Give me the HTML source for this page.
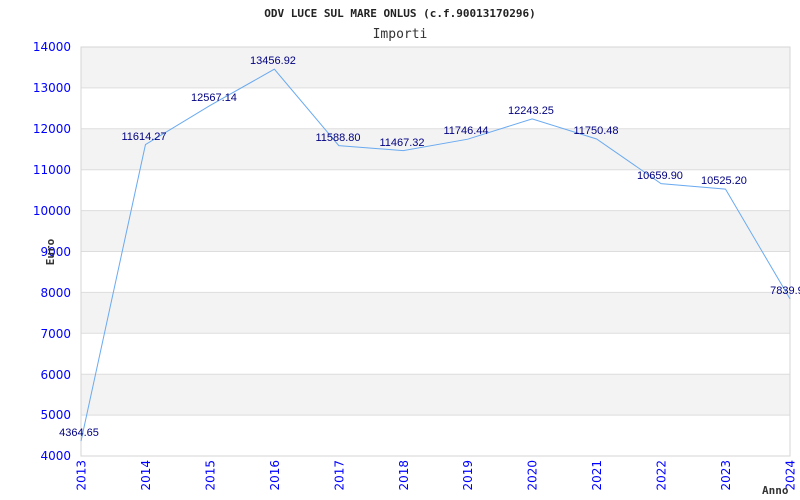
<!DOCTYPE html><html><head><meta charset="utf-8"><style>body{margin:0;background:#fff}svg{display:block}</style></head><body>
<svg width="800" height="500" xmlns="http://www.w3.org/2000/svg">
<rect width="800" height="500" fill="#fff"/>
<text x="400" y="17" text-anchor="middle" font-family="DejaVu Sans Mono, Liberation Mono, monospace" font-weight="bold" font-size="11" fill="#222">ODV LUCE SUL MARE ONLUS (c.f.90013170296)</text>
<text x="400" y="38" text-anchor="middle" font-family="DejaVu Sans Mono, Liberation Mono, monospace" font-size="13" fill="#333">Importi</text>
<g fill="#f3f3f3">
<rect x="81" y="47" width="709" height="40.9"/>
<rect x="81" y="128.8" width="709" height="40.9"/>
<rect x="81" y="210.6" width="709" height="40.9"/>
<rect x="81" y="292.4" width="709" height="40.9"/>
<rect x="81" y="374.2" width="709" height="40.9"/>
</g>
<g stroke="#ddd" stroke-width="1">
<line x1="81" x2="790" y1="87.9" y2="87.9"/><line x1="81" x2="790" y1="128.8" y2="128.8"/>
<line x1="81" x2="790" y1="169.7" y2="169.7"/><line x1="81" x2="790" y1="210.6" y2="210.6"/>
<line x1="81" x2="790" y1="251.5" y2="251.5"/><line x1="81" x2="790" y1="292.4" y2="292.4"/>
<line x1="81" x2="790" y1="333.3" y2="333.3"/><line x1="81" x2="790" y1="374.2" y2="374.2"/>
<line x1="81" x2="790" y1="415.1" y2="415.1"/>
<rect x="81" y="47" width="709" height="409" fill="none" stroke="#d6d6d6"/>
</g>
<g font-family="DejaVu Sans, Liberation Sans, sans-serif" font-size="12" fill="#0000ff" text-anchor="end">
<text x="71" y="51">14000</text><text x="71" y="92">13000</text><text x="71" y="133">12000</text>
<text x="71" y="174">11000</text><text x="71" y="215">10000</text><text x="71" y="256">9000</text>
<text x="71" y="297">8000</text><text x="71" y="338">7000</text><text x="71" y="379">6000</text>
<text x="71" y="419">5000</text><text x="71" y="460">4000</text>
</g>
<g font-family="DejaVu Sans, Liberation Sans, sans-serif" font-size="12" fill="#0000ff" text-anchor="end">
<text transform="translate(85.5,460) rotate(-90)">2013</text>
<text transform="translate(150,460) rotate(-90)">2014</text>
<text transform="translate(214.4,460) rotate(-90)">2015</text>
<text transform="translate(278.9,460) rotate(-90)">2016</text>
<text transform="translate(343.3,460) rotate(-90)">2017</text>
<text transform="translate(407.8,460) rotate(-90)">2018</text>
<text transform="translate(472.2,460) rotate(-90)">2019</text>
<text transform="translate(536.7,460) rotate(-90)">2020</text>
<text transform="translate(601.1,460) rotate(-90)">2021</text>
<text transform="translate(665.6,460) rotate(-90)">2022</text>
<text transform="translate(730,460) rotate(-90)">2023</text>
<text transform="translate(794.5,460) rotate(-90)">2024</text>
</g>
<text transform="translate(54,252) rotate(-90)" text-anchor="middle" font-family="DejaVu Sans Mono, monospace" font-weight="bold" font-size="11" fill="#333">Euro</text>
<text x="762" y="494" font-family="DejaVu Sans Mono, monospace" font-weight="bold" font-size="11" fill="#333">Anno</text>
<polyline fill="none" stroke="#6aaaf0" stroke-width="1" points="81,441.1 145.45,144.6 209.9,105.6 274.35,69.2 338.8,145.6 403.25,150.6 467.7,139.2 532.15,118.9 596.6,139 661.05,183.6 725.5,189.1 790,298.9"/>
<g font-family="Liberation Sans, sans-serif" font-size="11" fill="#000080" text-anchor="middle">
<text x="79" y="436">4364.65</text>
<text x="144" y="140">11614.27</text>
<text x="214" y="101">12567.14</text>
<text x="273" y="64">13456.92</text>
<text x="338" y="141">11588.80</text>
<text x="402" y="146">11467.32</text>
<text x="466" y="134">11746.44</text>
<text x="531" y="114">12243.25</text>
<text x="596" y="134">11750.48</text>
<text x="660" y="179">10659.90</text>
<text x="724" y="184">10525.20</text>
<text x="790" y="294">7839.90</text>
</g>
</svg>
</body></html>
